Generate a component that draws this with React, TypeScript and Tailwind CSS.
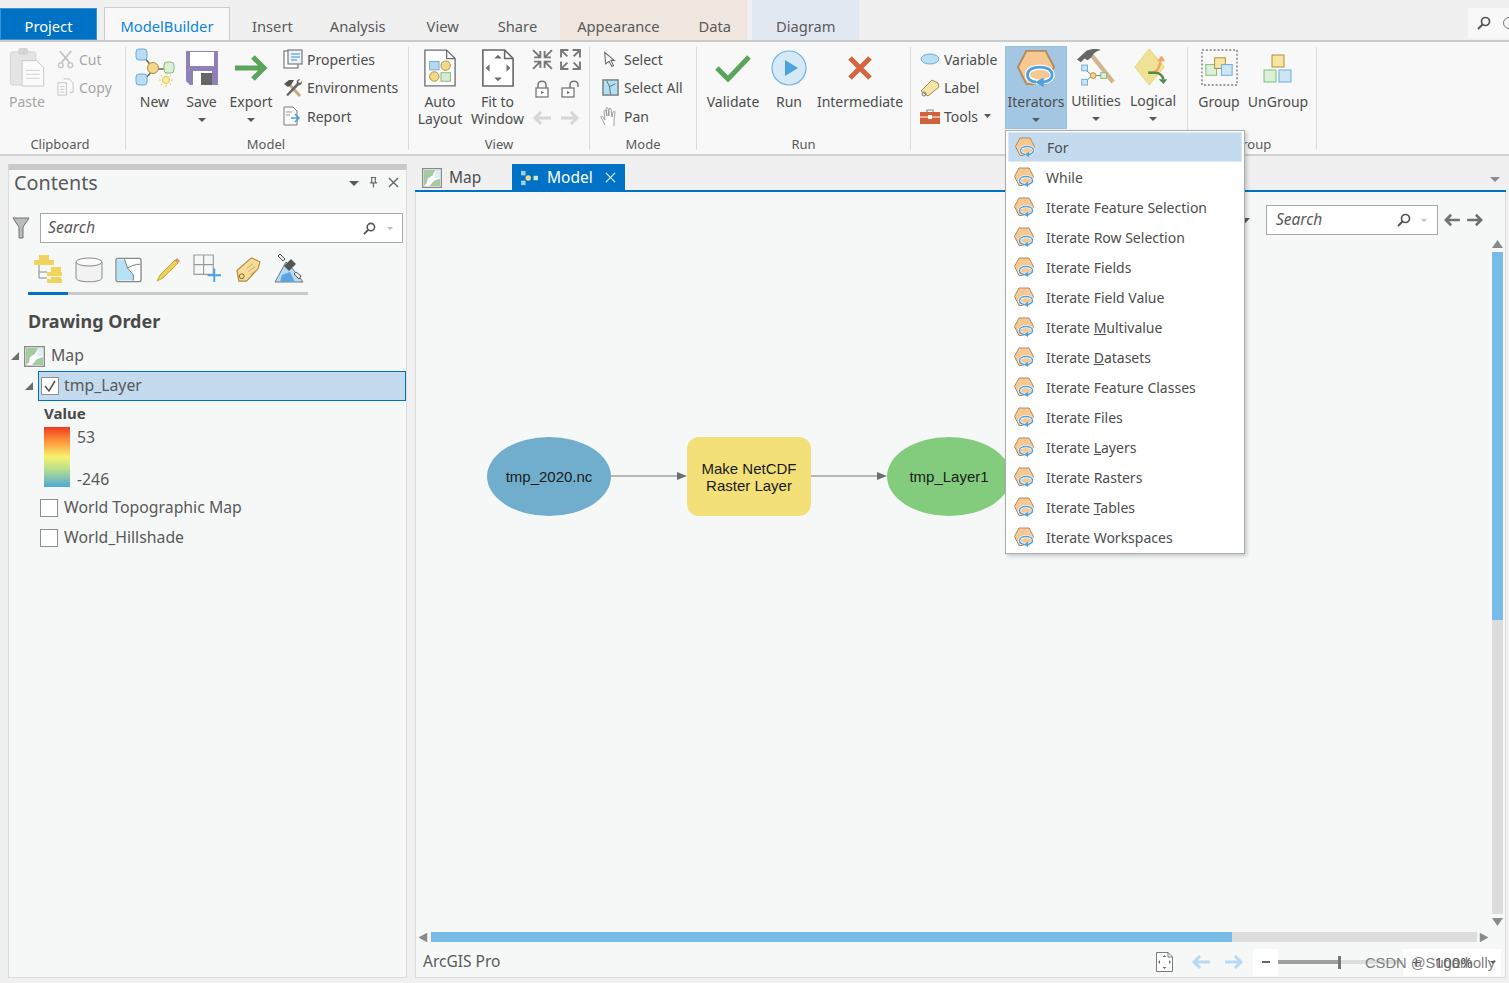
import type { ReactNode } from 'react';

function Caret({ className = 'w-[9px] h-[5px]', color = '#595959' }: { className?: string; color?: string }) {
  return (
    <svg viewBox="0 0 9 5" preserveAspectRatio="none" className={className}>
      <path d="M0 0h9L4.5 5z" fill={color} />
    </svg>
  );
}

function HexIcon({ className = 'w-[20px] h-[20px]' }: { className?: string }) {
  return (
    <svg viewBox="0 0 40 40" className={className}>
      <path d="M10 2h20l9 17-9 18H10L1 19z" fill="#f8c893" stroke="#b08a5e" strokeWidth="2" />
      <ellipse cx="24" cy="27" rx="13" ry="8" fill="none" stroke="#fff" strokeWidth="5.500" />
      <path d="M20 35c-6-1-9-4-9-8 0-5 6-8 13-8s13 3 13 8c0 4-4 7-10 8" fill="none" stroke="#4aa3df" strokeWidth="3" />
      <path d="M28 30v10l-9-5z" fill="#4aa3df" />
    </svg>
  );
}

function ModelNodesIcon({ className = 'w-[40px] h-[40px]' }: { className?: string }) {
  return (
    <svg viewBox="0 0 40 40" className={className}>
      <path d="M8 8l11 13M8 33l11-12M19 21h14" stroke="#666" strokeWidth="1.5" />
      <rect x="1" y="1" width="11" height="11" rx="3" fill="#bcdcf2" stroke="#66aede" />
      <rect x="1" y="26" width="11" height="11" rx="3" fill="#bcdcf2" stroke="#66aede" />
      <rect x="29" y="14" width="10" height="11" rx="3" fill="#dcefd8" stroke="#7fbf78" />
      <circle cx="18" cy="20" r="5.5" fill="#f1d98a" stroke="#b58a3c" />
      <circle cx="31" cy="32" r="3.6" fill="#f7ec9f" stroke="#e8c94c" />
      <path d="M31 25v2M31 37v2M24 32h2M36 32h2M26 27l1.500 1.500M36 27l-1.500 1.500M26 37l1.500-1.500M36 37l-1.500-1.500" stroke="#e8c94c" />
    </svg>
  );
}

function AutoLayoutIcon() {
  return (
    <svg viewBox="0 0 36 40" className="w-[34px] h-[38px]">
      <path d="M2 1h23l9 9v29H2z" fill="#fff" stroke="#6e6e6e" strokeWidth="1.400" />
      <path d="M25 1v9h9" fill="none" stroke="#6e6e6e" strokeWidth="1.400" />
      <rect x="7" y="13" width="10" height="9" fill="#b6d8f1" stroke="#6aa9d8" />
      <circle cx="24" cy="17.500" r="5" fill="#f1d98a" stroke="#b58a3c" />
      <circle cx="12" cy="29" r="5" fill="#f1d98a" stroke="#b58a3c" />
      <rect x="19" y="25" width="10" height="9" fill="#d8ecd4" stroke="#7fb878" />
    </svg>
  );
}

function FitWindowIcon({ className = 'w-[34px] h-[38px]' }: { className?: string }) {
  return (
    <svg viewBox="0 0 36 40" className={className}>
      <path d="M2 1h23l9 9v29H2z" fill="#fff" stroke="#666" strokeWidth="1.700" />
      <path d="M25 1v9h9" fill="none" stroke="#666" strokeWidth="1.700" />
      <path d="M18 6l4 4h-8zM18 34l4-4h-8zM5 20l4-4v8zM31 20l-4-4v8z" fill="#6e6e6e" />
    </svg>
  );
}

function Arrow({ dir, color, className = 'w-[20px] h-[16px]' }: { dir: 'left' | 'right'; color: string; className?: string }) {
  return (
    <svg viewBox="0 0 20 16" className={className}>
      <path
        d={dir === 'right' ? 'M1 8h16M11 2l6 6-6 6' : 'M19 8H3M9 2L3 8l6 6'}
        fill="none"
        stroke={color}
        strokeWidth="3"
      />
    </svg>
  );
}

function Magnifier({ className = 'w-[14px] h-[14px]' }: { className?: string }) {
  return (
    <svg viewBox="0 0 14 14" className={`${className} shrink-0`}>
      <circle cx="8.500" cy="5.500" r="4" fill="none" stroke="#555" strokeWidth="1.700" />
      <path d="M5.500 8.500L1 13" stroke="#555" strokeWidth="2" />
    </svg>
  );
}

function CollapseIcons() {
  return (
    <>
      <svg viewBox="0 0 20 20" className="w-[21px] h-[21px]">
        <path d="M1 1l6 6M8 2v6H2M19 1l-6 6M12 2v6h6M1 19l6-6M8 18v-6H2M19 19l-6-6M12 18v-6h6" fill="none" stroke="#777" strokeWidth="1.800" />
      </svg>
      <svg viewBox="0 0 20 20" className="w-[21px] h-[21px]">
        <path d="M7 7L2 2M1 8V1h7M13 7l5-5M19 8V1h-7M7 13l-5 5M1 12v7h7M13 13l5 5M19 12v7h-7" fill="none" stroke="#777" strokeWidth="1.800" />
      </svg>
    </>
  );
}

function LockIcon({ open = false }: { open?: boolean }) {
  return (
    <svg viewBox="0 0 20 20" className="w-[20px] h-[20px]">
      {open ? (
        <path d="M10 9V6c0-5 8-5 8 0v2" fill="none" stroke="#777" strokeWidth="1.500" />
      ) : (
        <path d="M6 9V6c0-5 8-5 8 0v3" fill="none" stroke="#777" strokeWidth="1.500" />
      )}
      <rect x={open ? 2 : 4} y="9" width="12" height="9" fill="#fff" stroke="#777" strokeWidth="1.300" />
      <path d={open ? 'M7 12l3 1.500L7 15z' : 'M9 12l3 1.500L9 15z'} fill="#666" />
    </svg>
  );
}

function TreeMapIcon({ className = 'w-[21px] h-[21px]' }: { className?: string }) {
  return (
    <svg viewBox="0 0 21 21" className={className}>
      <rect x=".7" y=".7" width="19.600" height="19.600" fill="#fff" stroke="#8a8a8a" strokeWidth="1.400" />
      <path d="M2 2h12l-3 6-5 3-1 5-3 3z" fill="#a5c9a0" />
      <path d="M14 2h5v8l-6 1z" fill="#dbeef5" />
      <path d="M13 13l6-2v8H8z" fill="#a5c9a0" />
    </svg>
  );
}

function SmallRow({ icon, label, muted = false, caret = false }: { icon: ReactNode; label: string; muted?: boolean; caret?: boolean }) {
  return (
    <div className={`flex items-center h-[28.500px] ${muted ? 'text-[#a6a6a6]' : ''}`}>
      <span className="w-[24px] h-[24px] flex items-center justify-center shrink-0">{icon}</span>
      <span className="ml-[2px] whitespace-nowrap">{label}</span>
      {caret && <Caret className="ml-[6px] w-[7px] h-[4px]" />}
    </div>
  );
}

function BigButton({
  icon,
  lines,
  width,
  caret = false,
  muted = false,
  active = false,
}: {
  icon: ReactNode;
  lines: string[];
  width: string;
  caret?: boolean;
  muted?: boolean;
  active?: boolean;
}) {
  return (
    <div
      className={`${width} h-[83px] flex flex-col items-center shrink-0 leading-[17px] ${muted ? 'text-[#a6a6a6]' : ''} ${
        active ? 'bg-[#a3c6e2] border border-[#99c0de]' : ''
      }`}
    >
      <div className="h-[41px] flex items-center justify-center">{icon}</div>
      <div className="mt-[5px] text-center whitespace-nowrap">
        {lines.map((line) => (
          <div key={line}>{line}</div>
        ))}
      </div>
      {caret && <Caret className="mt-[8px] w-[8px] h-[4px]" />}
    </div>
  );
}

function RibbonGroup({ width, label, labelClass = '', children }: { width: string; label?: string; labelClass?: string; children: ReactNode }) {
  return (
    <div className={`${width} h-[103px] mt-[5px] border-r border-[#dcdcdc] flex flex-col shrink-0`}>
      <div className="flex-1 flex min-h-0">{children}</div>
      <div className={`h-[12px] text-center text-[13px] leading-[12px] text-[#595959] ${labelClass}`}>{label ?? ''}</div>
    </div>
  );
}

function TopTabs() {
  const plain = 'h-[32px] pt-[2px] whitespace-nowrap';
  return (
    <div className="h-[42px] bg-[#f0f0f0] border-b-2 border-[#cacaca] flex items-end text-[14.700px] text-[#595959] leading-[32px] shrink-0">
      <div className="w-[97px] h-[32px] pt-[1px] bg-[#0072c6] border border-[#3b94d3] text-white text-center">Project</div>
      <div className="ml-[7px] w-[126px] h-[33px] pt-[2px] bg-[#f8f8f8] border border-b-0 border-[#cccccc] text-[#0a83dc] text-center">ModelBuilder</div>
      <div className={`ml-[22px] ${plain}`}>Insert</div>
      <div className={`ml-[37px] ${plain}`}>Analysis</div>
      <div className={`ml-[41px] ${plain}`}>View</div>
      <div className={`ml-[39px] ${plain}`}>Share</div>
      <div className="ml-[23px] w-[187px] h-[41px] bg-[#efe6e0] pl-[17px] pt-[11px] flex gap-[39px]">
        <span>Appearance</span>
        <span>Data</span>
      </div>
      <div className="ml-[5px] w-[107px] h-[41px] bg-[#e1e8f2] pt-[11px] text-center">Diagram</div>
      <div className="ml-auto mb-[2px] w-[41px] h-[30px] bg-[#f8f8f8] flex items-center pl-[9px] gap-[12px] overflow-hidden">
        <Magnifier />
        <span className="w-[12px] h-[12px] rounded-full border border-[#777] shrink-0" />
      </div>
    </div>
  );
}

function Ribbon() {
  return (
    <div className="h-[114px] bg-[#f8f8f8] border-b-2 border-[#d0d0d0] flex text-[14px] text-[#4d4d4d] leading-[17px] shrink-0">
      <RibbonGroup width="w-[126px]" label="Clipboard" labelClass="pr-[5px]">
        <div className="pl-[7px]">
          <BigButton
            width="w-[40px]"
            muted
            lines={['Paste']}
            icon={
              <svg viewBox="0 0 36 42" className="w-[36px] h-[41px]">
                <rect x="1" y="5" width="26" height="34" rx="2" fill="#e4e4e4" stroke="#d4d4d4" />
                <rect x="9" y="1" width="10" height="7" rx="2" fill="#d4d4d4" />
                <path d="M13 14h15l7 7v19H13z" fill="#fbfbfb" stroke="#c8c8c8" />
                <path d="M17 24h14M17 28h14M17 32h14" stroke="#d0d0d0" />
              </svg>
            }
          />
        </div>
        <div className="ml-[6px] mt-[-2px] text-[#a6a6a6]">
          <SmallRow
            muted
            label="Cut"
            icon={
              <svg viewBox="0 0 20 20" className="w-[19px] h-[19px]">
                <path d="M4 1l10 12M16 1L6 13" stroke="#c2c2c2" strokeWidth="1.800" />
                <circle cx="5" cy="16" r="2.500" fill="none" stroke="#c2c2c2" strokeWidth="1.400" />
                <circle cx="15" cy="16" r="2.500" fill="none" stroke="#c2c2c2" strokeWidth="1.400" />
              </svg>
            }
          />
          <SmallRow
            muted
            label="Copy"
            icon={
              <svg viewBox="0 0 20 20" className="w-[19px] h-[19px]">
                <path d="M2 5h9v13H2zM8 1h6l4 4v10h-4" fill="#fafafa" stroke="#c2c2c2" />
                <path d="M4 9h5M4 12h5M4 15h5" stroke="#c8c8c8" />
              </svg>
            }
          />
        </div>
      </RibbonGroup>

      <RibbonGroup width="w-[283px]" label="Model" labelClass="pr-[2px]">
        <div className="pl-[5px] flex">
          <BigButton width="w-[47px]" lines={['New']} icon={<ModelNodesIcon />} />
          <BigButton
            width="w-[47px]"
            lines={['Save']}
            caret
            icon={
              <svg viewBox="0 0 34 36" className="w-[34px] h-[36px]">
                <path d="M1 1h32v34H5l-4-4z" fill="#9180b8" />
                <rect x="5" y="2" width="24" height="14" fill="#fff" />
                <rect x="8" y="21" width="19" height="14" fill="#fff" />
                <rect x="16" y="23" width="11" height="12" fill="#666" />
              </svg>
            }
          />
          <BigButton
            width="w-[52px]"
            lines={['Export']}
            caret
            icon={
              <svg viewBox="0 0 34 28" className="w-[34px] h-[28px]">
                <path d="M1 14h29M19 3l11 11-11 11" fill="none" stroke="#5ca45c" strokeWidth="5" />
              </svg>
            }
          />
        </div>
        <div className="ml-[4px] mt-[-2px]">
          <SmallRow
            label="Properties"
            icon={
              <svg viewBox="0 0 20 20" className="w-[20px] h-[20px]">
                <rect x="1" y="2" width="14" height="17" fill="#fff" stroke="#7a7a7a" strokeWidth="1.200" />
                <rect x="5" y="1" width="14" height="14" fill="#eaf3fa" stroke="#7a7a7a" strokeWidth="1.200" />
                <path d="M8 5h9M8 8h9M8 11h6" stroke="#3f8fc9" strokeWidth="1.200" />
              </svg>
            }
          />
          <SmallRow
            label="Environments"
            icon={
              <svg viewBox="0 0 20 20" className="w-[20px] h-[20px]">
                <path d="M6 6l11 12" stroke="#c6a97f" strokeWidth="3" />
                <path d="M1 6l5-4 5 0-3 5-3 2z" fill="#555" />
                <path d="M17 1c-3 0-4 3-3 4L3 17l2 1L16 7c2 1 3-2 3-4l-2 2-2-1z" fill="#666" />
              </svg>
            }
          />
          <SmallRow
            label="Report"
            icon={
              <svg viewBox="0 0 20 20" className="w-[20px] h-[20px]">
                <path d="M1 1h9l4 4v14H1z" fill="#fafafa" stroke="#7a7a7a" />
                <path d="M8 12h7M12 8l4 4-4 4" fill="none" stroke="#4aa3df" strokeWidth="1.600" />
                <path d="M3 6h6M3 9h4" stroke="#999" />
              </svg>
            }
          />
        </div>
      </RibbonGroup>

      <RibbonGroup width="w-[181px]" label="View">
        <div className="pl-[1px] flex">
          <BigButton width="w-[60px]" lines={['Auto', 'Layout']} icon={<AutoLayoutIcon />} />
          <BigButton width="w-[55px]" lines={['Fit to', 'Window']} icon={<FitWindowIcon />} />
        </div>
        <div className="ml-[3px] mt-[-2px] grid grid-cols-[28px_28px] grid-rows-[29px_29px_29px] justify-items-center items-center">
          <CollapseIcons />
          <LockIcon />
          <LockIcon open />
          <Arrow dir="left" color="#d6d6d6" />
          <Arrow dir="right" color="#d6d6d6" />
        </div>
      </RibbonGroup>

      <RibbonGroup width="w-[107px]" label="Mode">
        <div className="ml-[8px] mt-[-2px]">
          <SmallRow
            label="Select"
            icon={
              <svg viewBox="0 0 16 18" className="w-[14px] h-[17px]">
                <path d="M2 1l11 9H9l3 6-2 1-3-6-4 3z" fill="#fff" stroke="#666" strokeWidth="1.200" />
              </svg>
            }
          />
          <SmallRow
            label="Select All"
            icon={
              <svg viewBox="0 0 18 18" className="w-[17px] h-[17px]">
                <rect x="1" y="1" width="16" height="16" fill="#aee1f3" stroke="#7a7a7a" strokeWidth="1.500" />
                <path d="M5 2l3 6 1 8M8 8l6-3" fill="none" stroke="#666" />
              </svg>
            }
          />
          <SmallRow
            label="Pan"
            icon={
              <svg viewBox="0 0 20 20" className="w-[20px] h-[20px]">
                <path d="M5 19L1 11c0-1 1-1 2 0l2 3-1-9c0-1 2-1 2 0l1 5-1-7c0-2 2-2 2 0l1 7 0-7c0-1 2-1 2 0l1 8 1-5c1-1 2-1 2 0l-1 8 0 6" fill="#fff" stroke="#888" strokeWidth=".8" />
              </svg>
            }
          />
        </div>
      </RibbonGroup>

      <RibbonGroup width="w-[214px]" label="Run">
        <div className="pl-[8px] flex">
          <BigButton
            width="w-[56px]"
            lines={['Validate']}
            icon={
              <svg viewBox="0 0 36 28" className="w-[36px] h-[28px]">
                <path d="M2 14l11 11L34 3" fill="none" stroke="#5ca45c" strokeWidth="5" />
              </svg>
            }
          />
          <BigButton
            width="w-[56px]"
            lines={['Run']}
            icon={
              <svg viewBox="0 0 36 36" className="w-[36px] h-[36px]">
                <circle cx="18" cy="18" r="17" fill="#d5e9f7" stroke="#70b5e4" strokeWidth="1.200" />
                <path d="M14 10l13 8-13 8z" fill="#4aa3df" />
              </svg>
            }
          />
          <BigButton
            width="w-[86px]"
            lines={['Intermediate']}
            icon={
              <svg viewBox="0 0 26 26" className="w-[26px] h-[26px]">
                <path d="M3 3l20 20M23 3L3 23" stroke="#d4663f" strokeWidth="5" />
              </svg>
            }
          />
        </div>
      </RibbonGroup>

      <RibbonGroup width="w-[277px]">
        <div className="ml-[7px] mt-[-2px] w-[87px]">
          <SmallRow
            label="Variable"
            icon={
              <svg viewBox="0 0 20 12" className="w-[20px] h-[12px]">
                <ellipse cx="10" cy="6" rx="9" ry="5" fill="#bcdcf2" stroke="#66aede" />
              </svg>
            }
          />
          <SmallRow
            label="Label"
            icon={
              <svg viewBox="0 0 20 20" className="w-[20px] h-[20px]">
                <path d="M1 13L12 2l6 3 1 4-11 9z" fill="#f6e3a6" stroke="#a08a5a" />
                <circle cx="4" cy="16" r="2" fill="none" stroke="#777" />
              </svg>
            }
          />
          <SmallRow
            label="Tools"
            caret
            icon={
              <svg viewBox="0 0 20 15" className="w-[20px] h-[15px]">
                <rect x="0" y="3" width="20" height="12" fill="#d0623c" />
                <path d="M7 3V1h6v2" fill="none" stroke="#8a8a8a" strokeWidth="1.200" />
                <path d="M0 8h20" stroke="#fff" />
                <rect x="8" y="6" width="4" height="4" fill="#fff" />
              </svg>
            }
          />
        </div>
        <div className="-mt-[1px] flex">
          <BigButton width="w-[62px]" active caret lines={['Iterators']} icon={<HexIcon className="w-[38px] h-[38px]" />} />
          <BigButton
            width="w-[58px]"
            caret
            lines={['Utilities']}
            icon={
              <svg viewBox="0 0 42 40" className="w-[40px] h-[38px]">
                <path d="M16 7l23 29" stroke="#d3b48d" strokeWidth="4.500" />
                <path d="M1 12L11 3c6-3 12-2 15-1-4 1-8 3-10 8l-4 3-3-2-4 4z" fill="#666" />
                <path d="M9 22l8 7M9 36l8-7M17 29h11" stroke="#777" />
                <rect x="6" y="18" width="6" height="6" fill="#cfe5f5" stroke="#66aede" />
                <rect x="6" y="33" width="6" height="6" fill="#cfe5f5" stroke="#66aede" />
                <circle cx="18" cy="29" r="3" fill="#f1d98a" stroke="#b58a3c" />
                <rect x="26" y="26" width="6" height="6" fill="#dcefd8" stroke="#7fbf78" />
              </svg>
            }
          />
          <BigButton
            width="w-[56px]"
            caret
            lines={['Logical']}
            icon={
              <svg viewBox="0 0 40 40" className="w-[38px] h-[38px]">
                <path d="M16 1l16 19-16 19L1 20z" fill="#f0e294" stroke="#e6d57a" />
                <path d="M15 26c8 0 11-2 13-12" fill="none" stroke="#f4a55a" strokeWidth="2.500" />
                <path d="M24 14l5-6 4 6z" fill="#f4a55a" />
                <path d="M15 26h7c6 0 8 3 9 7" fill="none" stroke="#4e8d4e" strokeWidth="2.500" />
                <path d="M26 33h9l-4 5z" fill="#4e8d4e" />
              </svg>
            }
          />
        </div>
      </RibbonGroup>

      <RibbonGroup width="w-[129px]" label="Group">
        <div className="pl-[1px] flex">
          <BigButton
            width="w-[60px]"
            lines={['Group']}
            icon={
              <svg viewBox="0 0 38 38" className="w-[37px] h-[37px]">
                <rect x="1" y="1" width="36" height="36" fill="none" stroke="#777" strokeWidth="1.400" strokeDasharray="2 2" />
                <rect x="5" y="16" width="11" height="11" fill="#dcefd8" stroke="#7fbf78" />
                <rect x="14" y="9" width="11" height="11" fill="#f6e6a0" stroke="#b58a3c" />
                <rect x="21" y="16" width="11" height="11" fill="#cfe5f5" stroke="#66aede" />
              </svg>
            }
          />
          <BigButton
            width="w-[58px]"
            lines={['UnGroup']}
            icon={
              <svg viewBox="0 0 30 30" className="w-[30px] h-[30px]">
                <rect x="9" y="2" width="12" height="12" fill="#f6e6a0" stroke="#b58a3c" />
                <rect x="1" y="17" width="12" height="12" fill="#dcefd8" stroke="#7fbf78" />
                <rect x="16" y="17" width="12" height="12" fill="#cfe5f5" stroke="#66aede" />
              </svg>
            }
          />
        </div>
      </RibbonGroup>
    </div>
  );
}

function ToolIcons() {
  return (
    <div className="flex items-end h-[30px] pl-[24px] gap-[12.500px]">
      <svg viewBox="0 0 29 28" className="w-[29px] h-[28px]">
        <rect x="6" y="0" width="10" height="5" fill="#f2d45c" />
        <rect x="1" y="5" width="20" height="5" fill="#f2d45c" />
        <path d="M6 10v13h8M6 17h8" fill="none" stroke="#888" />
        <rect x="18" y="12" width="10" height="5" fill="#f2d45c" />
        <rect x="14" y="17" width="15" height="4" fill="#f2d45c" />
        <rect x="18" y="22" width="10" height="2" fill="#f2d45c" />
        <rect x="14" y="24" width="15" height="4" fill="#f2d45c" />
      </svg>
      <svg viewBox="0 0 28 26" className="w-[28px] h-[26px]">
        <path d="M1 5v16c0 5 26 5 26 0V5" fill="#f2f2f2" stroke="#888" />
        <ellipse cx="14" cy="5" rx="13" ry="4" fill="#fafafa" stroke="#888" />
      </svg>
      <svg viewBox="0 0 28 26" className="w-[27px] h-[26px]">
        <rect x="1" y="1" width="26" height="24" rx="2" fill="#fff" stroke="#888" strokeWidth="1.400" />
        <path d="M2 2h8l3 9 6 7 0 6H2z" fill="#b5e3f5" />
        <path d="M10 2l3 9 6 7 0 6M13 11c3-2 8-4 13-4" fill="none" stroke="#777" />
      </svg>
      <svg viewBox="0 0 26 26" className="w-[26px] h-[26px]">
        <path d="M2 24l3-6L20 3l3 3L8 21z" fill="#f0ce5b" stroke="#caa93c" />
        <path d="M20 3l3 3 2-2-3-3z" fill="#e68c7a" />
      </svg>
      <svg viewBox="0 0 30 30" className="w-[29px] h-[29px]">
        <path d="M1 1h20v20H1zM11 1v20M1 11h20" fill="none" stroke="#999" strokeWidth="1.200" />
        <path d="M22 15v14M15 22h14" stroke="#4aa3df" strokeWidth="2" />
      </svg>
      <svg viewBox="0 0 28 28" className="w-[27px] h-[27px]">
        <path d="M2 15L17 2l9 4-2 7L12 26H4z" fill="#f6dc9a" stroke="#b58a3c" strokeWidth="1.200" />
        <circle cx="7" cy="21" r="2.500" fill="none" stroke="#7a5a2a" />
        <path d="M12 13l7-5M14 16l7-5M16 19l6-4" stroke="#c9a862" />
      </svg>
      <svg viewBox="0 0 30 30" className="w-[30px] h-[30px]">
        <path d="M1 29L12 9l6 6 11 14z" fill="#b5dcf3" stroke="#777" />
        <path d="M8 22l8-3 5 10H6z" fill="#5da5dc" />
        <path d="M6 1l5 5-2 2-5-5zM22 19l5 4-2 3-5-5z" fill="#eee" stroke="#555" />
        <path d="M10 13l7-7 5 5-7 7z" fill="#555" />
      </svg>
    </div>
  );
}

function Checkbox({ checked = false }: { checked?: boolean }) {
  return (
    <span className="w-[18px] h-[18px] bg-white border border-[#8f8f8f] flex items-center justify-center shrink-0">
      {checked && (
        <svg viewBox="0 0 14 14" className="w-[14px] h-[14px]">
          <path d="M2 7l4 5 6-10" fill="none" stroke="#555" strokeWidth="1.500" />
        </svg>
      )}
    </span>
  );
}

function Twisty() {
  return (
    <svg viewBox="0 0 8 8" className="w-[8px] h-[8px] shrink-0">
      <path d="M8 0v8H0z" fill="#6e6e6e" />
    </svg>
  );
}

function ContentsPanel() {
  return (
    <div className="ml-[8px] mt-[8px] mb-[5px] w-[399px] bg-[#f6f8f8] border-x border-b border-[#dcdcdc] border-t-[6px] border-t-[#c9c9c9] flex flex-col text-[#595959] text-[15.800px] shrink-0">
      <div className="h-[30px] flex items-center pl-[5px] pr-[7px] mt-[-2px]">
        <span className="text-[19.800px]">Contents</span>
        <Caret className="ml-auto w-[10px] h-[5px]" />
        <svg viewBox="0 0 10 12" className="ml-[10px] mb-[3px] w-[9px] h-[12px]">
          <path d="M2 1h6M3 1v6M7 1v6M1 7h8M5 7v5" fill="none" stroke="#666" strokeWidth="1.300" />
        </svg>
        <svg viewBox="0 0 12 12" className="ml-[10px] mb-[2px] w-[11px] h-[11px]">
          <path d="M1 1l10 10M11 1L1 11" stroke="#666" strokeWidth="1.500" />
        </svg>
      </div>
      <div className="mt-[15px] flex items-center pl-[3px] pr-[3px]">
        <svg viewBox="0 0 18 22" className="w-[18px] h-[22px]">
          <path d="M1 1h16L11 10v11H7V10z" fill="#bcbcbc" stroke="#6e6e6e" />
        </svg>
        <div className="ml-[10px] flex-1 h-[30px] bg-white border border-[#a8a8a8] flex items-center pl-[7px] pr-[9px] text-[#595959]">
          <span className="italic">Search</span>
          <Magnifier className="ml-auto w-[13px] h-[13px]" />
          <Caret className="ml-[11px] w-[6px] h-[3px]" color="#c0c0c0" />
        </div>
      </div>
      <div className="mt-[10px]">
        <ToolIcons />
      </div>
      <div className="ml-[19px] mt-[9px] w-[280px] h-[3px] bg-[#c9c9c9]">
        <div className="w-[40px] h-[3px] bg-[#0072c6]" />
      </div>
      <div className="ml-[19px] mt-[14px] font-bold text-[18px] text-[#4a4a4a] leading-[24px]">Drawing Order</div>
      <div className="mt-[8px] h-[30px] flex items-center pl-[2px]">
        <Twisty />
        <TreeMapIcon className="ml-[5px] w-[21px] h-[21px]" />
        <span className="ml-[6px]">Map</span>
      </div>
      <div className="h-[30px] flex items-center pl-[16px]">
        <Twisty />
        <div className="ml-[5px] flex-1 h-[30px] bg-[#c4daee] border border-[#0072c6] flex items-center pl-[2px]">
          <Checkbox checked />
          <span className="ml-[5px]">tmp_Layer</span>
        </div>
      </div>
      <div className="pl-[35px] mt-[2px]">
        <div className="font-bold text-[15px] text-[#4a4a4a] leading-[20px]">Value</div>
        <div className="flex h-[62px] mt-[4px]">
          <div className="w-[26px] h-[60px] bg-[linear-gradient(180deg,#f03b20_0%,#fd9a3c_25%,#f5f36e_50%,#b9df8c_70%,#4ea8d8_100%)]" />
          <div className="ml-[7px] flex flex-col justify-between leading-[20px]">
            <span>53</span>
            <span>-246</span>
          </div>
        </div>
      </div>
      <div className="mt-[4px] pl-[31px] flex items-center h-[30px]">
        <Checkbox />
        <span className="ml-[6px]">World Topographic Map</span>
      </div>
      <div className="pl-[31px] flex items-center h-[30px]">
        <Checkbox />
        <span className="ml-[6px]">World_Hillshade</span>
      </div>
    </div>
  );
}

function ModelEdge() {
  return (
    <svg viewBox="0 0 76 10" className="absolute top-[279px] w-[76px] h-[10px]" aria-hidden>
      <path d="M0 5h66" stroke="#777" strokeWidth="1.200" />
      <path d="M66 1l10 4-10 4z" fill="#6e6e6e" />
    </svg>
  );
}

function Diagram() {
  const shared = "absolute top-[245px] w-[124px] h-[79px] flex items-center justify-center text-center font-['Liberation_Sans',sans-serif] text-[15px] leading-[17px] text-[#1a1a1a]";
  return (
    <>
      <div className={`${shared} left-[71px] rounded-[50%] bg-[#71aecd]`}>tmp_2020.nc</div>
      <div className="left-[195px] absolute top-0 h-0"><ModelEdge /></div>
      <div className={`${shared} left-[271px] rounded-[12px] bg-[#f3e079]`}>
        Make NetCDF
        <br />
        Raster Layer
      </div>
      <div className="left-[395px] absolute top-0 h-0"><ModelEdge /></div>
      <div className={`${shared} left-[471px] rounded-[50%] bg-[#84cc7d]`}>tmp_Layer1</div>
    </>
  );
}

function ModelCanvas() {
  return (
    <div className="ml-[8px] mt-[8px] mb-[5px] flex-1 mr-[3px] flex flex-col min-w-0">
      <div className="h-[26px] flex items-stretch text-[15.500px] text-[#4d4d4d] shrink-0">
        <div className="ml-[7px] flex items-center w-[90px] pt-[1px]">
          <TreeMapIcon className="w-[20px] h-[20px]" />
          <span className="ml-[7px]">Map</span>
        </div>
        <div className="w-[113px] bg-[#0072c6] text-white flex items-center pl-[8px] pt-[1px]">
          <svg viewBox="0 0 22 18" className="w-[20px] h-[16px]">
            <rect x="1" y="1" width="5" height="5" fill="#9fd0f2" />
            <rect x="1" y="12" width="5" height="5" fill="#9fd0f2" />
            <circle cx="9" cy="9" r="3" fill="#f1d98a" />
            <rect x="15" y="6.500" width="5" height="5" fill="#c9e8c4" />
          </svg>
          <span className="ml-[7px]">Model</span>
          <svg viewBox="0 0 12 12" className="ml-[12px] w-[11px] h-[11px]">
            <path d="M1 1l10 10M11 1L1 11" stroke="#d7ebfa" strokeWidth="1.400" />
          </svg>
        </div>
        <Caret className="ml-auto mr-[6px] mt-[13px] w-[10px] h-[5px]" color="#8a8a8a" />
      </div>
      <div className="h-[2px] bg-[#0072c6] shrink-0" />
      <div className="flex-1 bg-[#f6f8f8] border-x border-b border-[#dcdcdc] flex flex-col min-h-0">
        <div className="flex-1 flex min-h-0">
          <div className="flex-1 relative min-w-0">
            <div className="flex justify-end items-center pt-[13px] pr-[5px] text-[#595959] text-[15.500px]">
              <Caret className="mr-[16px] w-[9px] h-[5px]" />
              <div className="w-[172px] h-[30px] bg-white border border-[#a8a8a8] flex items-center pl-[9px] pr-[10px]">
                <span className="italic">Search</span>
                <Magnifier className="ml-auto w-[14px] h-[14px]" />
                <Caret className="ml-[10px] w-[6px] h-[3px]" color="#c0c0c0" />
              </div>
              <div className="ml-[5px] flex gap-[5px]">
                <Arrow dir="left" color="#707070" className="w-[18px] h-[14px]" />
                <Arrow dir="right" color="#707070" className="w-[18px] h-[14px]" />
              </div>
            </div>
            <Diagram />
          </div>
          <div className="w-[16px] flex flex-col items-center shrink-0 pt-[48px]">
            <Caret className="w-[11px] h-[8px] rotate-180" color="#8a8a8a" />
            <div className="mt-[4px] w-[11px] flex-1 bg-[#dcdcdc]">
              <div className="h-[368px] bg-[#78bbe8]" />
            </div>
            <Caret className="my-[4px] w-[11px] h-[8px]" color="#8a8a8a" />
          </div>
        </div>
        <div className="h-[14px] flex items-center pl-[2px] pr-[16px] shrink-0">
          <Caret className="w-[10px] h-[9px] rotate-90" color="#8a8a8a" />
          <div className="ml-[3px] flex-1 h-[10px] bg-[#dcdcdc]">
            <div className="h-[10px] w-[801px] bg-[#78bbe8]" />
          </div>
          <Caret className="ml-[2px] w-[10px] h-[9px] -rotate-90" color="#8a8a8a" />
        </div>
        <div className="h-[33px] flex items-center pl-[7px] pt-[3px] text-[15.500px] text-[#595959] shrink-0 relative">
          <span>ArcGIS Pro</span>
          <FitWindowIcon className="ml-[auto] w-[19px] h-[20px]" />
          <Arrow dir="left" color="#b7d9f1" className="ml-[17px] w-[20px] h-[16px]" />
          <Arrow dir="right" color="#b7d9f1" className="ml-[13px] w-[20px] h-[16px]" />
          <div className="ml-[9px] w-[25px] h-[27px] bg-white flex items-center justify-center">
            <span className="w-[8px] h-[2px] bg-[#666]" />
          </div>
          <div className="w-[125px] h-[4px] bg-[#dcdcdc] flex items-center">
            <div className="w-[60px] h-[4px] bg-[#a0a0a0]" />
            <div className="w-[3px] h-[13px] bg-[#777]" />
          </div>
          <div className="w-[98px] h-[27px] mr-[4px] bg-white flex items-center pl-[9px] text-[#4d4d4d] text-[15px] gap-[14px]">
            <span>+</span>
            <span>100%</span>
            <Caret className="ml-auto mr-[5px] w-[6px] h-[3px]" />
          </div>
          <span className="absolute right-[10px] top-[9px] font-['Liberation_Sans',sans-serif] text-[14.700px] leading-[20px] text-[#6e6e6e]/90">CSDN @Sugarholly</span>
        </div>
      </div>
    </div>
  );
}

const ITERATORS: ReactNode[] = [
  'For',
  'While',
  'Iterate Feature Selection',
  'Iterate Row Selection',
  'Iterate Fields',
  'Iterate Field Value',
  <>Iterate <span className="underline">M</span>ultivalue</>,
  <>Iterate <span className="underline">D</span>atasets</>,
  'Iterate Feature Classes',
  'Iterate Files',
  <>Iterate <span className="underline">L</span>ayers</>,
  'Iterate Rasters',
  <>Iterate <span className="underline">T</span>ables</>,
  'Iterate Workspaces',
];

function IteratorsMenu() {
  return (
    <div className="absolute left-[1005px] top-[130px] w-[240px] h-[424px] bg-white border border-[#ababab] shadow-[2px_2px_4px_rgba(0,0,0,0.2)] px-[2px] pt-[1px] text-[14px] text-[#4d4d4d]">
      {ITERATORS.map((item, i) => (
        <div key={i} className={`h-[30px] flex items-center pl-[6px] ${i === 0 ? 'bg-[#c4daee] border border-[#dce9f5]' : ''}`}>
          <HexIcon className="w-[20px] h-[20px]" />
          <span className="ml-[12px] whitespace-nowrap">{item}</span>
        </div>
      ))}
    </div>
  );
}

export default function App() {
  return (
    <div className="relative w-[1509px] h-[983px] overflow-hidden bg-[#f0f0f0] flex flex-col font-['Noto_Sans',sans-serif]">
      <TopTabs />
      <Ribbon />
      <div className="flex-1 flex min-h-0">
        <ContentsPanel />
        <ModelCanvas />
      </div>
      <IteratorsMenu />
    </div>
  );
}
